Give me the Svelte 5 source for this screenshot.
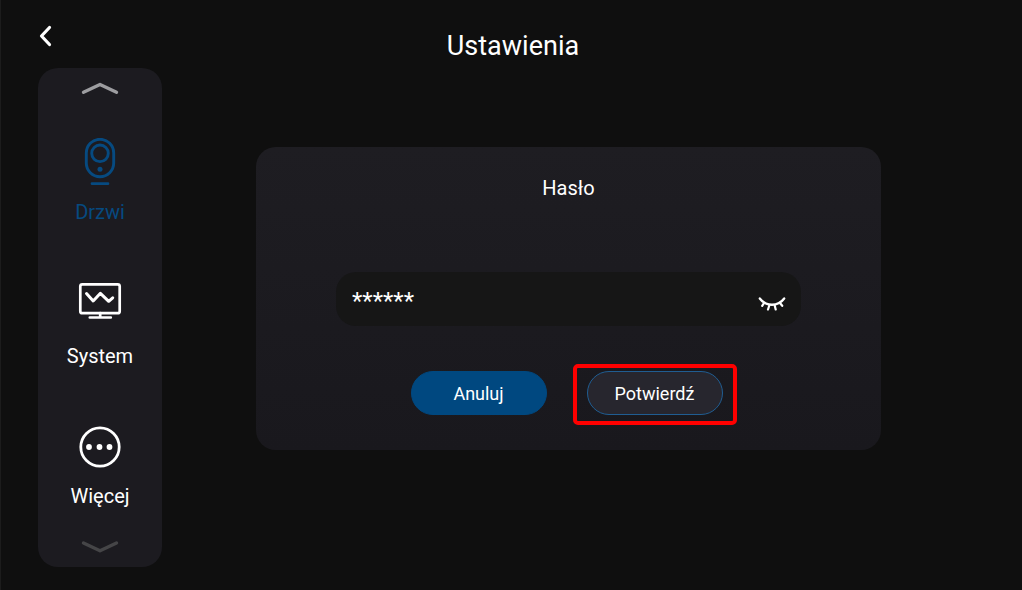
<script lang="ts">
  let password = $state("******");
  let active = $state("door");

  const items = [
    { key: "door", label: "Drzwi" },
    { key: "system", label: "System" },
    { key: "more", label: "Więcej" },
  ];
</script>

<div class="screen">
  <header>
    <button class="plain back" aria-label="Wstecz">
      <svg width="14" height="22" viewBox="0 0 14 22">
        <path d="M11.500 2.500 3.500 11l8 8.500" stroke-width="3.200" />
      </svg>
    </button>
    <h1>Ustawienia</h1>
  </header>

  <div class="body">
    <nav>
      <button class="plain scroll" aria-label="W górę">
        <svg width="38" height="14" viewBox="0 0 38 14">
          <path d="M2.500 10.300 19 2.500l16.500 7.800" stroke-width="3.400" />
        </svg>
      </button>

      <ul>
        {#each items as item}
          <li>
            <button
              class="plain item"
              class:active={active === item.key}
              onclick={() => (active = item.key)}
            >
              {#if item.key === "door"}
                <svg width="48" height="48" viewBox="0 0 48 48">
                  <rect x="10.300" y="1.300" width="27.400" height="37.400" rx="13.700" stroke-width="2.900" />
                  <circle cx="24" cy="15.300" r="8.300" stroke-width="2.900" />
                  <circle class="dot" cx="24" cy="31.200" r="2.500" />
                  <path d="M16 45.700h16" stroke-width="2.700" />
                </svg>
              {:else if item.key === "system"}
                <svg width="48" height="48" viewBox="0 0 48 48">
                  <rect x="4.300" y="2.300" width="39.400" height="28.900" rx="2" stroke-width="2.700" />
                  <path d="m10.500 11.500 6.700 7.500 7.200-7.700 8.300 8 4-3.500" stroke-width="3" />
                  <path d="M24.200 31v4.300M13.800 35.500h21" stroke-width="2.700" />
                </svg>
              {:else}
                <svg width="48" height="44" viewBox="0 0 48 44">
                  <circle cx="24" cy="21" r="19.200" stroke-width="2.800" />
                  <circle class="dot" cx="13" cy="21" r="2.900" />
                  <circle class="dot" cx="23.500" cy="21" r="2.900" />
                  <circle class="dot" cx="33.500" cy="21" r="2.900" />
                </svg>
              {/if}
              <span>{item.label}</span>
            </button>
          </li>
        {/each}
      </ul>

      <button class="plain scroll dim" aria-label="W dół">
        <svg width="38" height="14" viewBox="0 0 38 14">
          <path d="M2.500 4 19 11.800l16.500-7.800" stroke-width="3.400" />
        </svg>
      </button>
    </nav>

    <main>
      <form class="card" onsubmit={(e) => e.preventDefault()}>
        <label for="password">Hasło</label>
        <div class="field">
          <input id="password" type="text" autocomplete="off" bind:value={password}>
          <button type="button" class="plain eye" aria-label="Pokaż hasło">
            <svg width="30" height="18" viewBox="0 0 30 18">
              <path d="M2.800 3.500C9 11.800 21 11.800 27.200 3.500" stroke-width="2.300" />
              <path d="M7 8 5.200 10.800M12.300 10.500l-1.300 4M17.700 10.500l1 4M23 8l2.200 2.800" stroke-width="2.200" />
            </svg>
          </button>
        </div>
        <div class="actions">
          <button type="button" class="pill primary">Anuluj</button>
          <div class="highlight">
            <button type="submit" class="pill">Potwierdź</button>
          </div>
        </div>
      </form>
    </main>
  </div>
</div>

<style>
  :global(body) { margin: 0; background: #0f0f0f; }

  .screen {
    box-sizing: border-box;
    min-height: 100vh;
    padding-bottom: 23px;
    background: #0f0f0f;
    box-shadow: inset 1px 0 #1c1c1c;
    color: #fff;
    font-family: Roboto, "Noto Sans", sans-serif;
  }

  button, input { font: inherit; color: inherit; }
  button { cursor: pointer; }
  svg {
    display: block;
    fill: none;
    stroke: currentColor;
    stroke-linecap: round;
    stroke-linejoin: round;
  }
  .dot { fill: currentColor; stroke: none; }

  .plain {
    padding: 0;
    border: none;
    background: none;
  }

  header {
    display: grid;
    grid-template-columns: 1fr auto 1fr;
    height: 68px;
    padding: 0 34px 0 38px;
  }
  .back {
    justify-self: start;
    padding-top: 3px;
  }
  h1 {
    margin: 0;
    padding-top: 30px;
    font-size: 27px;
    line-height: 32px;
    font-weight: 400;
  }

  .body {
    display: flex;
    align-items: flex-start;
    padding-left: 38px;
  }

  nav {
    flex: 0 0 124px;
    border-radius: 20px;
    background: #1c1b20;
  }
  .scroll {
    display: flex;
    align-items: center;
    justify-content: center;
    width: 100%;
    height: 42px;
    color: #9d9da0;
  }
  .dim { color: #454547; }

  ul {
    display: flex;
    flex-direction: column;
    gap: 58px;
    margin: 0;
    padding: 28px 0 17px;
    list-style: none;
  }
  .item {
    display: flex;
    flex-direction: column;
    align-items: center;
    gap: 14px;
    width: 100%;
    font-size: 20px;
    line-height: 24px;
  }
  .active { color: #064a80; }

  main {
    flex: 1;
    padding: 79px 141px 0 94px;
  }
  .card {
    display: flex;
    flex-direction: column;
    padding: 29px 80px 35px;
    border-radius: 20px;
    background: linear-gradient(#1e1d22, #19181d);
  }
  label {
    align-self: center;
    font-size: 20px;
    line-height: 24px;
  }

  .field {
    display: flex;
    align-items: center;
    height: 54px;
    margin: 72px 0 45px;
    padding: 0 14px 0 16px;
    border-radius: 20px;
    background: #161616;
  }
  input {
    flex: 1;
    min-width: 0;
    padding: 4px 0 0;
    border: none;
    outline: none;
    background: none;
    font-size: 24px;
    line-height: 28px;
  }
  .eye { padding-top: 10px; }

  .actions {
    display: flex;
    justify-content: center;
    gap: 40px;
    padding-right: 4px;
  }
  .pill {
    width: 136px;
    height: 44px;
    padding: 0;
    border: 1px solid #205d92;
    border-radius: 22px;
    background: #27262e;
    font-size: 18px;
  }
  .primary { border-color: #004880; background: #004880; }

  /* Red frame round the confirm button */
  .highlight { position: relative; }
  .highlight::after {
    content: "";
    position: absolute;
    inset: -7px -14px -10px;
    border: 4px solid #f00;
    border-radius: 5px;
    pointer-events: none;
  }
</style>
